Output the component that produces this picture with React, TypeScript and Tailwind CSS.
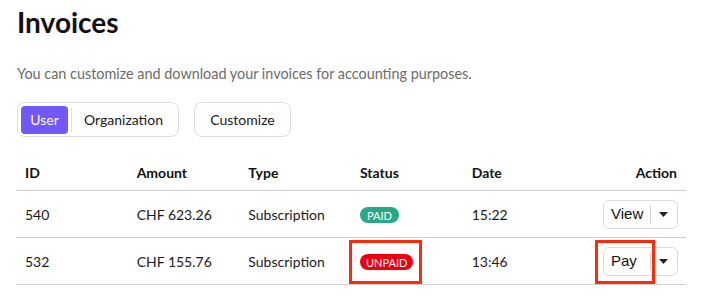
import React from "react";

const font = { fontFamily: "Lato, 'Noto Sans', sans-serif" };

function Caret() {
  return (
    <svg width="9" height="5" viewBox="0 0 9 5" className="block">
      <path d="M0 0 L9 0 L4.5 5 Z" fill="#222" />
    </svg>
  );
}

function SplitButton({ label }: { label: string }) {
  return (
    <div className="flex h-[29px] w-[75px] items-center rounded-[6px] border border-[#dcdcdc] bg-white">
      <span className="w-[46px] pl-[7px] text-[15px] text-[#111] [font-family:'Liberation_Sans',Arial,sans-serif]">
        {label}
      </span>
      <span className="h-[18px] w-px bg-[#d6d6d6]" />
      <span className="flex flex-1 justify-center">
        <Caret />
      </span>
    </div>
  );
}

export default function App() {
  const rows = [
    { id: "540", amount: "CHF 623.26", type: "Subscription", paid: true, date: "15:22", action: "View" },
    { id: "532", amount: "CHF 155.76", type: "Subscription", paid: false, date: "13:46", action: "Pay" },
  ];
  return (
    <div className="h-[304px] w-[708px] overflow-hidden bg-white pl-[16px] pr-[22px]" style={font}>
      <h1 className="ml-px mt-[4px] text-[28px] font-bold leading-[36px] text-[#111]">Invoices</h1>
      <p className="ml-px mt-[24px] text-[14.4px] leading-[20px] text-[#6b6b6b]">
        You can customize and download your invoices for accounting purposes.
      </p>
      <div className="ml-px mt-[18px] flex gap-[15px]">
        <div className="flex h-[35px] items-center rounded-[8px] border border-[#dedede] px-[3px]">
          <span className="flex h-[28px] w-[47px] items-center justify-center rounded-[4px] bg-[#7457f7] text-[14px] text-white">
            User
          </span>
          <span className="ml-[3px] h-[24px] w-px bg-[#e0e0e0]" />
          <span className="pl-[12px] pr-[12px] text-[14px] text-[#1a1a1a]">Organization</span>
        </div>
        <div className="flex h-[35px] w-[97px] items-center justify-center rounded-[8px] border border-[#dedede] text-[14px] text-[#1a1a1a]">
          Customize
        </div>
      </div>
      <div className="mt-[17px] w-[670px]">
        <div className="grid h-[37px] grid-cols-6 items-center border-b border-[#cfcfcf] text-[14px] font-bold text-[#111]">
          <div className="pl-[9px]">ID</div>
          <div className="pl-[9px]">Amount</div>
          <div className="pl-[9px]">Type</div>
          <div className="pl-[9px]">Status</div>
          <div className="pl-[9px]">Date</div>
          <div className="pr-[9px] text-right">Action</div>
        </div>
        {rows.map((r) => (
          <div
            key={r.id}
            className="relative grid h-[47px] grid-cols-6 items-center border-b border-[#cfcfcf] text-[14px] text-[#1a1a1a]"
          >
            <div className="pl-[9px]">{r.id}</div>
            <div className="pl-[9px]">{r.amount}</div>
            <div className="pl-[9px]">{r.type}</div>
            <div className="pl-[9px]">
              {r.paid ? (
                <span className="inline-flex h-[16px] items-center rounded-full bg-[#27a887] px-[7px] text-[11px] leading-none text-white">
                  PAID
                </span>
              ) : (
                <span className="inline-flex h-[16px] items-center rounded-full bg-[#ea0010] px-[6px] text-[11px] leading-none text-white">
                  UNPAID
                </span>
              )}
            </div>
            <div className="pl-[9px]">{r.date}</div>
            <div className="flex justify-end pr-[8px]">
              <SplitButton label={r.action} />
            </div>
            {!r.paid && (
              <>
                <div className="pointer-events-none absolute left-[333px] top-[2px] h-[44px] w-[73px] border-[3px] border-[#ff2a0a]" />
                <div className="pointer-events-none absolute left-[579px] top-[2px] h-[44px] w-[60px] border-[3px] border-[#ff2a0a]" />
              </>
            )}
          </div>
        ))}
      </div>
    </div>
  );
}
